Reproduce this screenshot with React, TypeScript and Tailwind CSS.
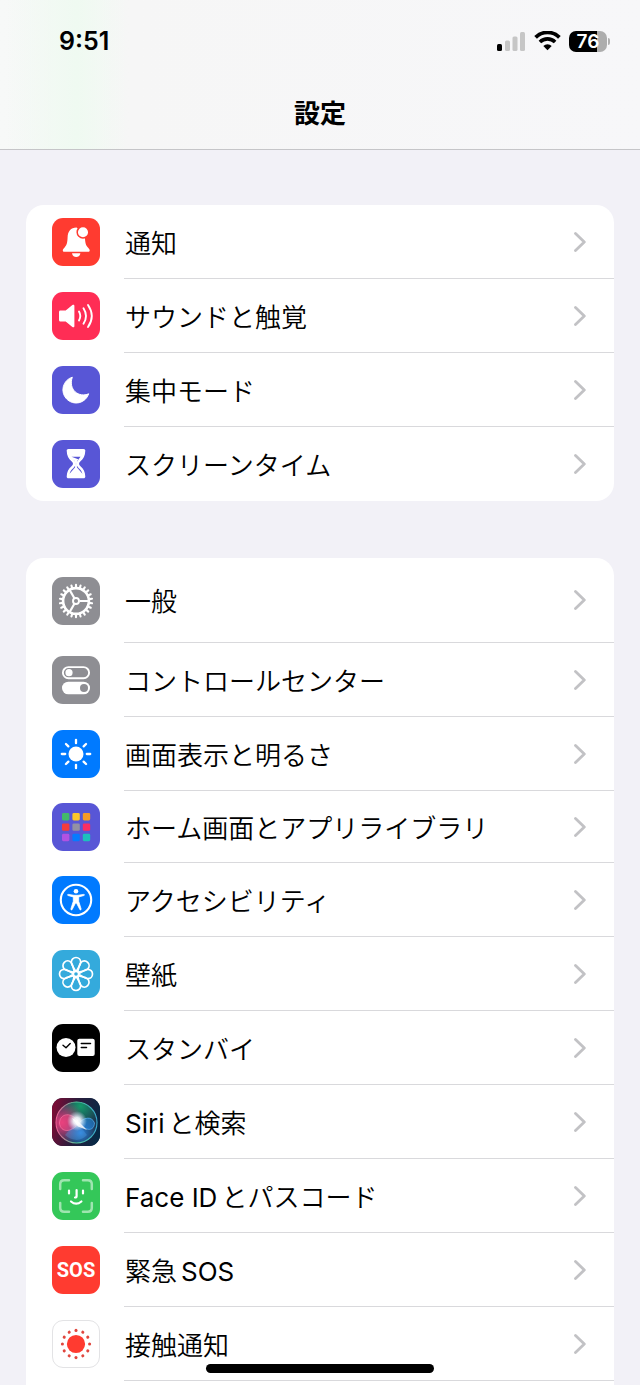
import type { ReactNode } from "react";

const petals = [0, 45, 90, 135, 180, 225, 270, 315];
const teeth = Array.from({ length: 22 }, (_, i) => (i * 360) / 22);
const dots = Array.from({ length: 12 }, (_, i) => i * 30);
const appColors = [
  "#43b96b", "#fbc72b", "#f79a26",
  "#f43b3d", "#9391a3", "#fb2e62",
  "#b152e2", "#067bff", "#1cc0bd",
];

function Tile({ color, children }: { color: string; children: ReactNode }) {
  return (
    <svg viewBox="0 0 48 48" className={`size-12 shrink-0 rounded-[11px] ${color}`} fill="none" aria-hidden="true">
      {children}
    </svg>
  );
}

const BellIcon = () => (
  <Tile color="bg-[#ff3b30]">
    <path fill="#fff" d="M24.6 9.5c-6 0-8.8 4.200-9 9.700-.2 5.500-.8 7.600-2.800 10-1.300 1.500-2 2.300-2 3.200 0 .8.600 1.300 1.500 1.300h23.900c.9 0 1.500-.5 1.500-1.300 0-.9-.7-1.700-2-3.200-1.700-2-2.400-3.700-2.700-8.500L31 16z" />
    <path fill="#fff" d="M20 35.300h8.400c-.3 2.400-2 3.700-4.200 3.700s-3.900-1.300-4.200-3.700z" />
    <circle cx="31" cy="14.200" r="5.800" fill="#fff" stroke="#ff3b30" strokeWidth="1.500" />
  </Tile>
);

const SoundIcon = () => (
  <Tile color="bg-[#ff2d55]">
    <path fill="#fff" d="M8.500 18.500h5.200l6.700-5.400c1-.8 2-.4 2 .8v20.200c0 1.200-1 1.600-2 .8l-6.700-5.400H8.500c-1 0-1.500-.6-1.500-1.500v-8c0-.9.500-1.500 1.500-1.500z" />
    <g stroke="#fff" strokeLinecap="round" strokeWidth="1.900">
      <path d="M27 19.500q2.600 4.500 0 9" />
      <path d="M31.500 16.200q5 7.800 0 15.600" />
      <path d="M36 13q7.600 11 0 22" />
    </g>
  </Tile>
);

const MoonIcon = () => (
  <Tile color="bg-[#5856d6]">
    <path fill="#fff" stroke="#fff" strokeLinejoin="round" d="M20.300 11.200A13.200 13.200 0 1 0 36.700 27.800C27 32 16 24 20.300 11.200z" />
  </Tile>
);

const HourglassIcon = () => (
  <Tile color="bg-[#5856d6]">
    <path fill="#fff" d="M16.500 9h15c1.200 0 1.900.7 1.800 1.800-.2 5-1.800 8-4.800 10.400-2 1.600-2 3.400 0 5 3 2.400 4.600 5.400 4.800 10.300 0 1.100-.6 1.800-1.800 1.800h-15c-1.200 0-1.900-.7-1.800-1.800.2-4.900 1.800-7.900 4.800-10.300 2-1.600 2-3.400 0-5-3-2.400-4.600-5.400-4.800-10.400C14.600 9.700 15.300 9 16.500 9z" />
    <path fill="#5856d6" d="M19.500 16.800h9c-.8 1.800-3.300 3-3.700 5.200v5.200l5.600 6.600c-.6-2.600-2-4.300-3.600-5.600-3-2.600-3-6 0-8.600zM23.200 22v5.200l-5.600 6.600c.6-2.600 2-4.300 3.600-5.600 3-2.600 3-6 0-8.600z" />
    <path stroke="#fff" strokeWidth="1.300" d="M24 20v9" />
  </Tile>
);

const GearIcon = () => (
  <Tile color="bg-[#8e8e93]">
    <g stroke="#fff">
      {teeth.map((a) => (
        <path key={a} d="M24 7.800v3" strokeWidth="2.100" strokeLinecap="round" transform={`rotate(${a} 24 24)`} />
      ))}
      <circle cx="24" cy="24" r="12.900" strokeWidth="2.600" />
      <circle cx="24" cy="24" r="3" strokeWidth="1.900" />
      {[90, 210, 330].map((a) => (
        <path key={a} d="M24 20.500V11" strokeWidth="2.200" transform={`rotate(${a} 24 24)`} />
      ))}
    </g>
  </Tile>
);

const TogglesIcon = () => (
  <Tile color="bg-[#8e8e93]">
    <rect x="10.900" y="11.100" width="26.200" height="11.200" rx="5.600" stroke="#fff" strokeWidth="1.900" />
    <circle cx="17" cy="16.700" r="3.600" fill="#fff" />
    <rect x="10" y="25.700" width="28" height="12.600" rx="6.300" fill="#fff" />
    <circle cx="32" cy="32" r="4" fill="#8e8e93" />
  </Tile>
);

const BrightnessIcon = () => (
  <Tile color="bg-[#007aff]">
    <circle cx="24" cy="24" r="7.500" fill="#fff" />
    {petals.map((a) => (
      <path key={a} d="M24 9.800v3.400" stroke="#fff" strokeWidth="2.300" strokeLinecap="round" transform={`rotate(${a} 24 24)`} />
    ))}
  </Tile>
);

const HomeGridIcon = () => (
  <Tile color="bg-[#5856d6]">
    {appColors.map((c, i) => (
      <rect key={c} x={10 + (i % 3) * 10.400} y={10 + Math.floor(i / 3) * 10.400} width="7.400" height="7.400" rx="1.400" fill={c} />
    ))}
  </Tile>
);

const AccessibilityIcon = () => (
  <Tile color="bg-[#007aff]">
    <circle cx="24" cy="24" r="15.200" stroke="#fff" strokeWidth="2.100" />
    <circle cx="24" cy="15.200" r="2.300" fill="#fff" />
    <path fill="#fff" stroke="#fff" strokeWidth=".8" strokeLinejoin="round" d="M16.300 18.400l5.700.9h4l5.700-.9c.9-.1 1 .9.200 1.100l-5.200 1.400v4.400l2.400 7.600c.3 1-.9 1.400-1.300.5L24.500 27h-1l-3.300 6.400c-.4.900-1.600.5-1.300-.5l2.400-7.600v-4.400l-5.200-1.400c-.8-.2-.7-1.200.2-1.100z" />
  </Tile>
);

const FlowerIcon = () => (
  <Tile color="bg-[#34aadc]">
    {petals.map((a) => (
      <path key={a} d="M24 22.500C23 18.500 19.300 16 19.300 12.200A4.700 4.700 0 0 1 28.700 12.200C28.700 16 25 18.500 24 22.500z" stroke="#fff" strokeWidth="1.700" strokeLinejoin="round" transform={`rotate(${a} 24 24)`} />
    ))}
    <circle cx="24" cy="24" r="2.600" fill="#34aadc" stroke="#fff" strokeWidth="1.600" />
  </Tile>
);

const StandbyIcon = () => (
  <Tile color="bg-black">
    <circle cx="14" cy="23.500" r="9.500" fill="#fff" />
    <path d="M11 21.200l3 2.600 4.200-4.300" stroke="#000" strokeWidth="1.400" strokeLinecap="round" strokeLinejoin="round" />
    <rect x="25.300" y="14.700" width="17.400" height="17.200" rx="2" fill="#fff" />
    <path d="M29.300 19.500h9.200M29.300 23.500h5.200" stroke="#000" strokeWidth="1.500" strokeLinecap="round" />
  </Tile>
);

const SiriIcon = () => (
  <Tile color="bg-[#16203f]">
    <defs>
      <linearGradient id="siriBack" x1="0" y1=".4" x2="1" y2=".6">
        <stop offset="0" stopColor="#7a0c35" />
        <stop offset=".45" stopColor="#2b1c3c" />
        <stop offset="1" stopColor="#062a46" />
      </linearGradient>
      <radialGradient id="siriGreen" cx=".6" cy=".1" r=".5">
        <stop offset="0" stopColor="#159a6b" />
        <stop offset="1" stopColor="#159a6b" stopOpacity="0" />
      </radialGradient>
      <radialGradient id="siriPink" cx=".15" cy=".5" r=".55">
        <stop offset="0" stopColor="#ee3a7c" />
        <stop offset="1" stopColor="#ee3a7c" stopOpacity="0" />
      </radialGradient>
      <radialGradient id="siriBlue" cx=".6" cy=".75" r=".4">
        <stop offset="0" stopColor="#2a7fd8" />
        <stop offset="1" stopColor="#2a7fd8" stopOpacity="0" />
      </radialGradient>
      <radialGradient id="siriGlow">
        <stop offset="0" stopColor="#fff" />
        <stop offset=".35" stopColor="#f4fcff" stopOpacity=".9" />
        <stop offset="1" stopColor="#c8e8ff" stopOpacity="0" />
      </radialGradient>
      <linearGradient id="siriRing" x1="0" y1=".5" x2="1" y2=".5">
        <stop offset="0" stopColor="#f25a93" />
        <stop offset=".5" stopColor="#52c69a" />
        <stop offset="1" stopColor="#39a9cf" />
      </linearGradient>
    </defs>
    <rect width="48" height="48" fill="url(#siriBack)" />
    <circle cx="24.500" cy="24.500" r="20.500" fill="#1c3550" />
    <circle cx="24.500" cy="24.500" r="20.500" fill="url(#siriGreen)" />
    <circle cx="24.500" cy="24.500" r="20.500" fill="url(#siriPink)" />
    <circle cx="24.500" cy="24.500" r="20.500" fill="url(#siriBlue)" />
    <path d="M27 25C20 13 8 15 7.500 25c1 10 12 10 19.500 0z" fill="#e8467f" fillOpacity=".6" stroke="#ff7cab" strokeWidth=".6" />
    <path d="M27 25c5-6 13-7 15.500 0-.5 8-8 9-15.500 0z" fill="#2587dd" fillOpacity=".6" stroke="#65bfff" strokeWidth=".6" />
    <path d="M25 24L13 37c8 7 17 6 22 0z" fill="#63b6ff" fillOpacity=".25" />
    <circle cx="25" cy="23" r="10" fill="url(#siriGlow)" />
    <path d="M20 20l8 5 7 7-9-3.500z" fill="#fff" fillOpacity=".8" />
    <circle cx="24.500" cy="24.500" r="20.500" stroke="url(#siriRing)" strokeWidth="1.100" />
  </Tile>
);

const FaceIdIcon = () => (
  <Tile color="bg-[#34c759]">
    <path d="M8.200 17v-4.800q0-4 4-4H17M31 8.200h4.800q4 0 4 4V17M39.800 31v4.800q0 4-4 4H31M17 39.800h-4.800q-4 0-4-4V31" stroke="#9fe5b0" strokeWidth="2.500" strokeLinecap="round" />
    <g stroke="#fff" strokeWidth="2.200" strokeLinecap="round" strokeLinejoin="round">
      <path d="M17 18.500v3M31 18.500v3M24.600 18v6q0 1.500-1.600 1.500" />
      <path d="M19 29.500q5.200 4.400 10.400 0" />
    </g>
  </Tile>
);

const SosIcon = () => (
  <div className="flex size-12 shrink-0 items-center justify-center rounded-[11px] bg-[#ff3b30]" aria-hidden="true">
    <span className="font-[Roboto,sans-serif] text-[20px] leading-none font-bold text-white">SOS</span>
  </div>
);

const ExposureIcon = () => (
  <Tile color="bg-white border border-[#e3e3e5]">
    <circle cx="24" cy="24" r="9.500" fill="#ff3b30" />
    {dots.map((a) => (
      <circle key={a} cx="24" cy="9.800" r="1.600" fill="#e0463e" transform={`rotate(${a} 24 24)`} />
    ))}
  </Tile>
);

type Item = { label: string[]; icon: ReactNode; height?: string };

const alerts: Item[] = [
  { label: ["通知"], icon: <BellIcon /> },
  { label: ["サウンドと触覚"], icon: <SoundIcon /> },
  { label: ["集中モード"], icon: <MoonIcon /> },
  { label: ["スクリーンタイム"], icon: <HourglassIcon /> },
];

const system: Item[] = [
  { label: ["一般"], icon: <GearIcon />, height: "h-[85px]" },
  { label: ["コントロールセンター"], icon: <TogglesIcon /> },
  { label: ["画面表示と明るさ"], icon: <BrightnessIcon /> },
  { label: ["ホーム画面とアプリライブラリ"], icon: <HomeGridIcon />, height: "h-[72px]" },
  { label: ["アクセシビリティ"], icon: <AccessibilityIcon /> },
  { label: ["壁紙"], icon: <FlowerIcon /> },
  { label: ["スタンバイ"], icon: <StandbyIcon /> },
  { label: ["Siri", "と検索"], icon: <SiriIcon /> },
  { label: ["Face ID", "とパスコード"], icon: <FaceIdIcon /> },
  { label: ["緊急", "SOS"], icon: <SosIcon /> },
  { label: ["接触通知"], icon: <ExposureIcon /> },
];

const isLatin = (text: string) => /^[A-Za-z ]+$/.test(text);

function Row({ item, divided }: { item: Item; divided: boolean }) {
  return (
    <li>
      <button type="button" className={`flex w-full items-center gap-6 pl-[26px] text-left ${item.height ?? "h-[74px]"}`}>
        {item.icon}
        <span className={`flex h-full min-w-0 flex-1 items-center justify-between border-b pr-7 pl-px ${divided ? "border-[#d9d9dc]" : "border-transparent"}`}>
          <span className="flex gap-1 pt-1 text-[26px] leading-8">
            {item.label.map((part) => (
              <span key={part} className={isLatin(part) ? "font-normal" : "font-[350]"}>
                {part}
              </span>
            ))}
          </span>
          <svg viewBox="0 0 12 20" className="h-5 w-3 shrink-0" fill="none" aria-hidden="true">
            <path d="M1.500 1.500L10.300 10l-8.800 8.500" stroke="#c2c2c5" strokeWidth="2.800" strokeLinecap="round" strokeLinejoin="round" />
          </svg>
        </span>
      </button>
    </li>
  );
}

function StatusIcons() {
  return (
    <div className="flex items-center gap-2">
      <svg viewBox="0 0 29 20" className="h-5 w-[29px]" aria-label="Signal">
        <rect x="0" y="13" width="5" height="7" rx="1.500" fill="#000" />
        <rect x="8" y="9.500" width="5" height="10.500" rx="1.500" fill="#c6c6c6" />
        <rect x="15.500" y="5.500" width="5" height="14.500" rx="1.500" fill="#c6c6c6" />
        <rect x="23" y="1" width="5" height="19" rx="1.500" fill="#c6c6c6" />
      </svg>
      <svg viewBox="0 0 27 20" className="h-5 w-[27px]" fill="none" aria-label="Wi-Fi">
        <path d="M1.600 6.300a17 17 0 0 1 23.800 0" stroke="#000" strokeWidth="3.800" />
        <path d="M5.900 11a10.800 10.800 0 0 1 15.200 0" stroke="#000" strokeWidth="3.600" />
        <path d="M9.300 15a6.200 6.200 0 0 1 8.400 0L13.500 19.300z" fill="#000" />
      </svg>
      <div className="flex items-center gap-px">
        <div className="flex h-[21px] w-[38px] items-center justify-center rounded-[7px] bg-linear-to-r from-black from-75% to-[#adadad] to-75%">
          <span className="text-[19px] leading-none font-semibold text-white">76</span>
        </div>
        <div className="h-[7px] w-[2px] rounded-r-full bg-[#b0b0b0]" />
      </div>
    </div>
  );
}

export default function App() {
  return (
    <div className="relative min-h-screen bg-[#f2f1f7] font-['Inter','Noto_Sans_CJK_JP',sans-serif] text-black" lang="ja">
      <header className="border-b border-[#c5c5c8] bg-linear-to-r from-[#f7f9f8] via-[#f6f6f6] via-20% to-[#f7f7f9]">
        <div className="bg-linear-to-r from-transparent from-1% via-[#effaf1] via-12% to-transparent to-20%">
          <div className="flex h-[82px] items-center justify-between pr-[30px] pl-[59px]">
            <time className="text-[25px] leading-8 font-semibold">9:51</time>
            <StatusIcons />
          </div>
          <div className="flex h-[67px] items-start justify-center">
            <h1 className="text-[26px] leading-[64px] font-bold">設定</h1>
          </div>
        </div>
      </header>
      <main className="flex flex-col gap-[57px] px-[26px] pt-[55px]">
        <ul className="overflow-hidden rounded-[18px] bg-white">
          {alerts.map((item, i) => (
            <Row key={i} item={item} divided={i < alerts.length - 1} />
          ))}
        </ul>
        <ul className="overflow-hidden rounded-t-[18px] bg-white pb-[5px]">
          {system.map((item, i) => (
            <Row key={i} item={item} divided />
          ))}
        </ul>
      </main>
      <div className="absolute inset-x-0 bottom-[13px] mx-auto h-[9px] w-[228px] rounded-full bg-black" />
    </div>
  );
}
